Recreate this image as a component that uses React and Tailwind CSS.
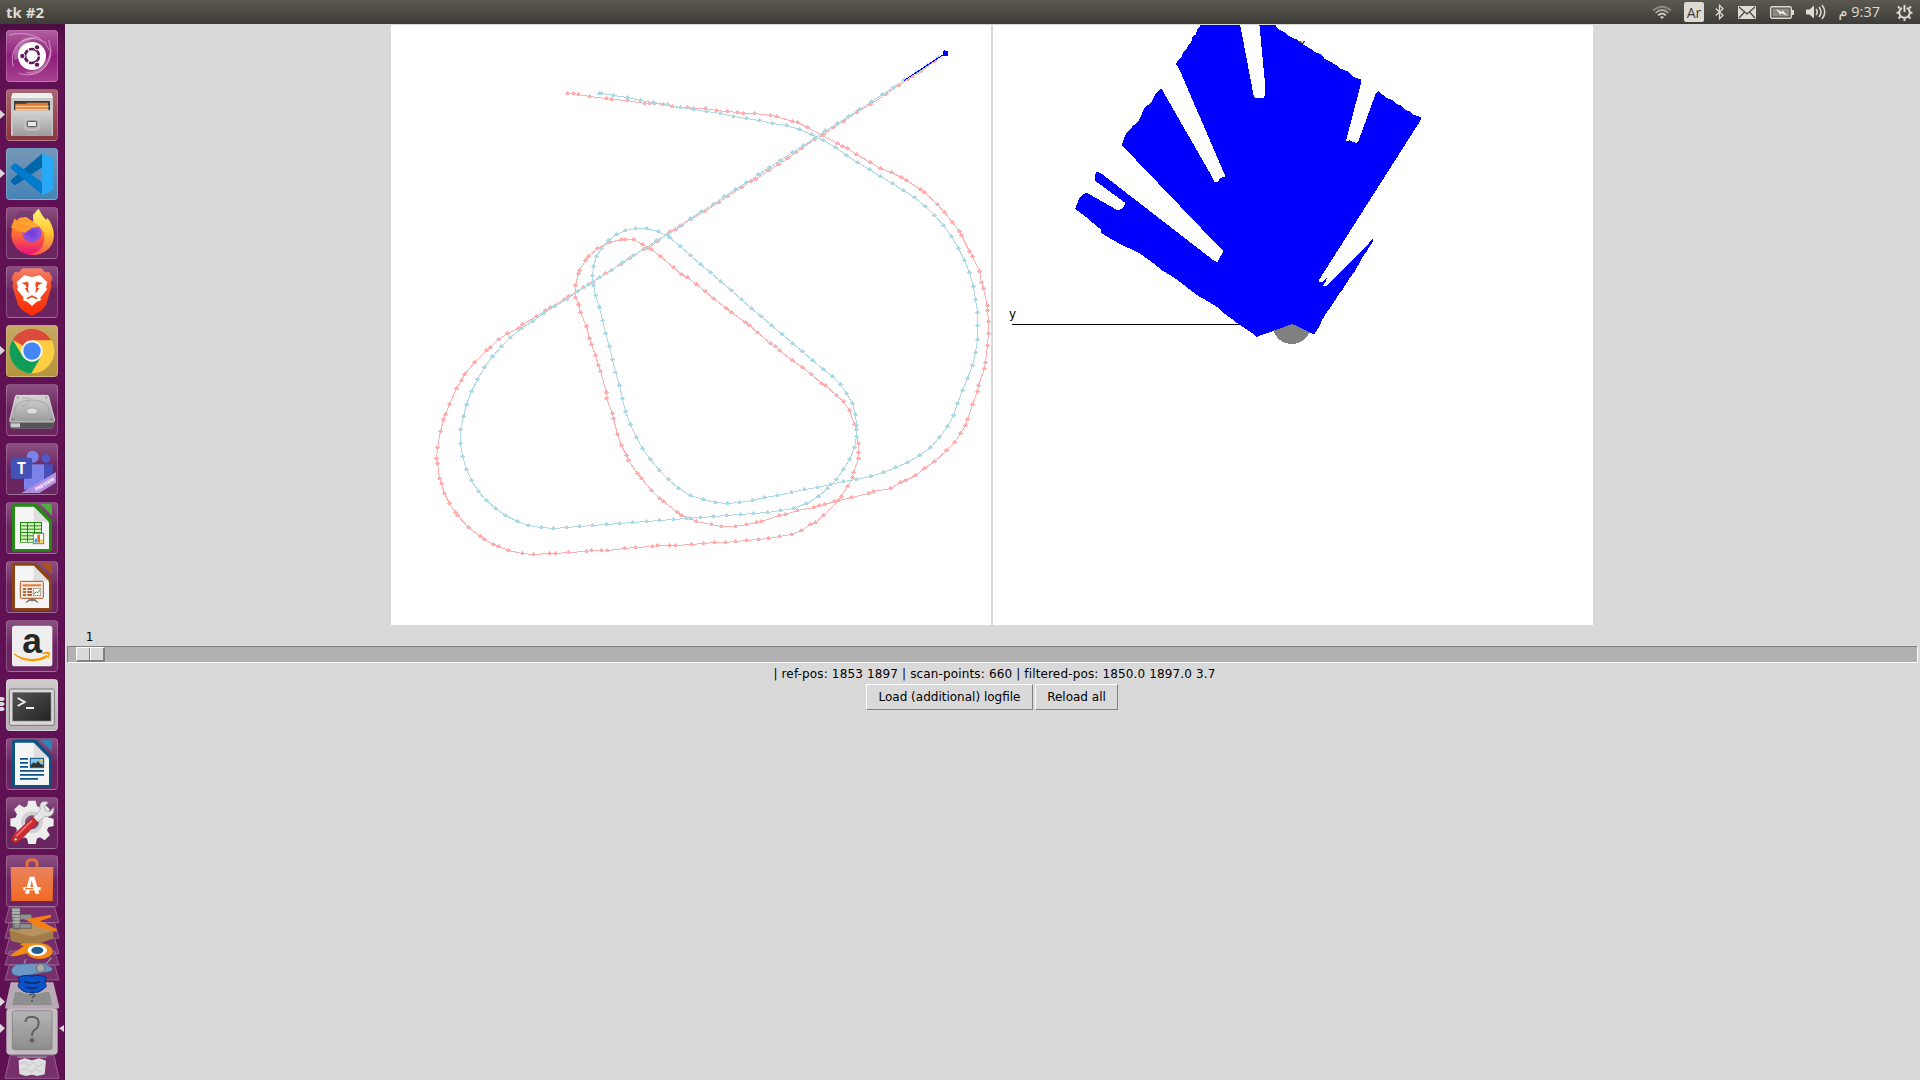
import React from "react";

/* Recorded samples, split by chart half: "u" upper half, "l" lower half. */
const REFERENCE_TRACK = [
  ["u", "398,219 415,220 428,222 458,229 504,235 517,238 561,241 607,250 620,250 634,250 658,252 683,259 704,262 723,261 740,265 772,265 801,270 831,273 858,276 875,280 904,280 948,285 963,289 1007,303 1020,306 1047,322 1088,346 1128,370 1142,378 1155,384 1179,402 1217,427 1245,445 1274,456 1301,471 1315,480 1353,508 1363,517 1398,552 1418,577 1439,606 1458,633 1463,646 1485,694 1493,709 1512,754 1517,787 1523,805 1534,856 1534,871"],
  ["l", "1537,64 1537,100 1534,136 1528,187 1526,205 1509,256 1506,274 1493,313 1479,358 1474,376 1461,400 1444,427 1423,451 1390,484 1363,505 1339,526 1312,541 1298,547 1271,565 1226,574 1212,580 1166,592 1120,604 1093,613 1080,616 1063,622 1020,631 988,643 971,646 923,664 910,667 882,673 853,679 815,679 788,673 747,664 731,654 706,646 696,636 657,603 647,595 626,570 599,534 587,519 563,481 557,465 544,435 533,403 522,355 519,340 503,295 503,277 487,213 482,196 474,165 462,132 459,115 449,78 433,37 427,12"],
  ["u", "419,832 419,796 427,760 431,751 447,720 455,709 480,685 511,667 544,657 556,657 577,657 601,672 626,687 649,709 685,741 707,763 723,771 747,793 771,814 793,835 828,865 842,877"],
  ["l", "880,67 890,75 911,97 948,130 960,138 971,151 1006,181 1034,202 1057,223 1085,250 1096,256 1125,286 1145,304 1160,331 1174,373 1179,388 1180,408 1185,430 1185,457 1185,475 1171,517 1168,532 1155,559 1139,589 1130,601 1090,646 1069,667 1055,673 1031,691 1004,703 971,709 942,715 915,718 882,721 853,724 826,727 796,727 766,730 734,733 691,736 674,736 641,736 628,739 583,742 552,745 507,751 491,751 463,751 450,754 401,757 366,760 350,760 307,763 277,760 239,750 211,739 198,733 174,718 163,709 130,682 100,646 95,636 79,610 65,580 57,550 52,535 46,490 44,475 46,442 55,394 63,358 68,343 80,313 98,265 111,241 120,223 147,187 180,151 190,142 211,118 236,100 265,85 277,73"],
  ["u", "315,889 339,871 352,862 391,838 401,829 442,802 465,785 501,760 541,733 566,715 604,688 615,684 641,662 677,634 691,628 707,616 731,598 769,574 807,547 831,529 869,502 893,484 907,478 942,451 968,432 993,415 1015,397 1031,385 1067,358 1090,342 1117,322 1145,304 1180,276 1217,253 1258,223 1293,196 1317,178 1332,169 1352,153 1390,122 1420,100"],
];

const FILTERED_TRACK = [
  ["u", "485,219 491,220 523,226 561,232 596,241 631,246 669,253 704,262 739,268 774,274 812,280 848,289 883,295 918,301 953,310 991,316 1025,328 1058,343 1090,361 1122,382 1152,406 1182,427 1215,448 1244,469 1277,490 1306,511 1337,532 1366,559 1390,586 1415,616 1436,649 1455,685 1471,721 1485,757 1496,799 1501,838 1507,877"],
  ["l", "1507,76 1507,118 1501,157 1493,196 1479,235 1466,271 1453,310 1442,346 1426,379 1404,412 1380,442 1350,466 1317,487 1285,502 1252,517 1217,529 1180,538 1145,544 1109,553 1074,562 1039,568 1004,577 966,586 931,592 899,600 864,607 831,610 799,607 766,598 731,586 699,565 671,538 647,511 622,478 601,445 584,412 568,373 555,334 547,295 538,256 528,217 519,178 511,139 501,100 492,61 484,22"],
  ["u", "474,826 468,796 465,766 468,739 476,709 490,685 509,660 531,643 556,631 583,625 612,625 645,633 674,652 704,679 731,706 758,733 785,757 812,784 842,811 869,838 896,865 922,889"],
  ["l", "950,75 979,102 1007,130 1033,154 1061,181 1090,208 1114,229 1136,253 1152,280 1168,310 1176,343 1179,376 1179,409 1174,442 1160,478 1144,508 1125,538 1101,565 1076,589 1044,610 1009,625 974,631 939,637 902,640 866,643 828,646 793,649 758,652 720,655 685,658 647,661 612,664 574,667 539,670 504,673 466,676 431,679 396,682 360,685 328,682 293,676 263,664 230,646 203,625 179,601 157,574 138,541 125,508 114,469 109,430 109,388 117,349 125,313 138,274 155,238 174,202 196,169 220,139 245,112 273,85 303,64"],
  ["u", "334,880 363,859 396,838 425,814 455,793 485,772 517,751 547,727 577,706 609,685 639,661 669,641 701,619 731,595 761,574 793,553 823,529 853,508 883,487 915,463 945,442 975,421 1007,397 1036,376 1066,355 1096,331 1128,310 1158,289 1188,268 1220,244 1250,223 1280,202 1309,178 1343,155 1372,135 1401,111 1420,100"],
];

const toCanvas = (track) =>
  track.flatMap(([half, list]) =>
    list.split(" ").map((p) => {
      const [a, b] = p.split(",").map(Number);
      return [Math.round(28.7 + a * 0.3699), Math.round((half === "u" ? -5 : 275) + b / 3)];
    })
  );

function Track({ data, color }) {
  const pts = toCanvas(data);
  return (
    <g fill={color} shapeRendering="crispEdges">
      <polyline points={pts.map((p) => `${p[0] + 0.5},${p[1] + 0.5}`).join(" ")} fill="none" stroke={color} strokeWidth="1" />
      {pts.map(([x, y], i) => (
        <path key={i} d={`M${x} ${y - 2}h1v1h1v1h1v1h-1v1h-3v-1h-1v-1h1v-1h1z`} />
      ))}
    </g>
  );
}

function TrackCanvas() {
  return (
    <svg width="600" height="600" className="block bg-white">
      <Track data={REFERENCE_TRACK} color="#ffaeb0" />
      <Track data={FILTERED_TRACK} color="#add8e6" />
      <g shapeRendering="crispEdges" fill="#0000ff">
        <path d="M513 55.5L554 28.5" stroke="#0000ff" strokeWidth="1" />
        <path d="M552 26h1v-1h1v1h3v5h-5z" />
      </g>
    </svg>
  );
}

function ScanCanvas() {
  return (
    <svg width="600" height="600" viewBox="993 25 600 600" className="block bg-white">
      <path d="M1012 324.5H1292" stroke="#000" shapeRendering="crispEdges" />
      <text x="1009" y="318" fontSize="12" fontFamily="DejaVu Sans, sans-serif">y</text>
      <text x="1298.5" y="48" fontSize="12" fontFamily="DejaVu Sans, sans-serif">x</text>
      <circle cx="1291.8" cy="324.5" r="19.5" fill="#808080" shapeRendering="crispEdges" />
      <g transform="translate(1000 20) scale(.33333)">
        <path
          shapeRendering="crispEdges"
          fill="#0000ff"
          d="M600 12L601 20L591 30L588 43L578 50L574 66L565 75L558 90L549 99L543 114L533 123L527 131L537 145L676 469L660 475L654 486L642 485L636 470L488 212L484 207L475 212L463 228L457 242L448 254L439 258L430 270L424 285L414 306L397 319L390 330L379 340L371 357L366 376L670 694L652 726L642 722L302 459L290 456L285 464V482L376 549L370 562L358 571L349 569L262 519L250 522L237 536L226 566L240 578L252 586L304 630L303 639L351 667L420 701L465 733L487 752L520 771L595 828L620 842L656 864L666 876L700 900L715 912L763 944L769 951L822 932L877 912L932 938L942 944L960 917L964 904L981 876L1000 850L1020 817L1028 808L1048 776L1065 753L1080 726L1087 712L1098 697L1119 665V657L980 797L968 798L977 785L981 774L967 786L957 786V780L1263 299V292L1240 284L1230 275L1214 268L1203 256L1190 252L1178 240L1160 234L1145 222L1135 213L1128 219L1076 361L1069 370L1058 365L1050 361L1038 363L1083 190V178L1065 173L1052 164L1042 154L1021 146L1010 136L989 124L973 116L965 104L947 97L934 88L915 76L901 70L893 60L865 47L854 37L832 25L824 12H778L796 200V225L790 234H767L761 227L720 12Z"
        />
      </g>
    </svg>
  );
}

/* ---------- launcher artwork, drawn on a 156-unit tile ---------- */
const UbuntuArt = () => (
  <>
    <g fill="none" stroke="#e6b4dc" strokeWidth="3" opacity=".7">
      <path d="M22 110C5 50 60 0 122 40" />
      <path d="M128 30C150 100 100 150 40 130" />
      <path d="M10 15C50 5 105 10 130 60" />
    </g>
    <path d="M26 90C15 45 55 8 105 25C80 20 40 40 36 85ZM134 50C150 100 90 150 55 125C95 130 130 100 134 50Z" fill="#fff" opacity=".28" />
    <circle cx="78" cy="78" r="42" fill="#fff" />
    <circle cx="78" cy="78" r="21" fill="none" stroke="#5e1a55" strokeWidth="8" strokeDasharray="40 3.98" transform="rotate(4 78 78)" />
    <g fill="#5e1a55" stroke="#fff" strokeWidth="3">
      <circle cx="49" cy="78" r="8" /><circle cx="93" cy="52" r="8" /><circle cx="93" cy="104" r="8" />
    </g>
  </>
);
const FilesArt = () => (
  <>
    <path d="M20 12H136L141 30V140H15V30Z" fill="#c9c9c9" />
    <path d="M20 12H136L141 27H15Z" fill="#efefef" />
    <rect x="24" y="36" width="108" height="30" fill="#3b3b3b" />
    <path d="M28 44H60L64 41H126V66H28Z" fill="#e07c36" />
    <path d="M28 50H128V55H28ZM28 59H128V64H28Z" fill="#f8c48e" />
    <rect x="21" y="64" width="116" height="76" fill="url(#metal)" />
    <rect x="57" y="91" width="42" height="32" rx="6" fill="#b5b5b5" stroke="#ddd" strokeWidth="2" />
    <rect x="64" y="97" width="28" height="16" rx="3" fill="#e8e8e8" stroke="#444" strokeWidth="3" />
  </>
);
const CodeArt = () => (
  <>
    <path d="M14 97L110 16V57L30 110Q26 112 23 109L15 102Z" fill="#0065a9" />
    <path d="M15 55L25 46Q29 45 32 48L110 104V138L104 136L15 62Q12 58 15 55Z" fill="#007acc" />
    <path d="M108 15L136 27Q141 30 141 35V120Q141 125 137 128L108 141Z" fill="#28a9f5" />
  </>
);
const FirefoxArt = () => (
  <>
    <circle cx="78" cy="82" r="62" fill="url(#foxBody)" />
    <path d="M98 5C106 20 112 32 122 40L124 32C148 62 150 100 130 123C110 142 90 146 68 142C100 140 116 118 115 88C114 68 98 55 82 48C76 34 84 16 98 5Z" fill="url(#foxTop)" />
    <path d="M36 14L28 34L60 30L82 44L80 12Z" fill="#793c6f" />
    <circle cx="78" cy="78" r="29" fill="url(#foxCore)" />
    <path d="M15 62L26 34L37 45C43 50 60 52 77 62C72 70 60 72 57 78C46 72 38 76 28 66Z" fill="#ff9a2e" />
    <path d="M37 45L82 44L100 60L77 62C60 52 43 50 37 45Z" fill="#ffa62e" />
  </>
);
const BraveArt = () => (
  <>
    <path d="M50 7H106L118 19L130 18L139 37L134 50L137 60L120 117L108 132L78 150L48 132L36 117L19 60L22 50L17 37L26 18L38 19Z" fill="url(#brave)" />
    <path d="M54 28L78 33L102 28L124 49L120 63L123 70L103 95L105 103L92 107L78 120L64 107L51 103L53 95L33 70L36 63L32 49Z" fill="#fff" />
    <path d="M46 51L65 47L68 53L66 70L69 80L64 78L56 66L63 66L58 57ZM110 51L91 47L88 53L90 70L87 80L92 78L100 66L93 66L98 57ZM61 96L78 88L95 96L91 100L78 94L65 100Z" fill="#ef4c23" />
  </>
);
const ChromeArt = () => (
  <>
    <circle cx="78" cy="78" r="67" fill="#ffcd42" />
    <path d="M78 78L20 44A67 67 0 0 1 136 46H78Z" fill="#db4a3c" />
    <path d="M50 94L20 44A67 67 0 0 0 76 145L106 94Z" fill="#109d58" />
    <circle cx="78" cy="78" r="32" fill="#f4f4f4" />
    <circle cx="78" cy="78" r="26" fill="#4486f4" />
  </>
);
const DiskArt = () => (
  <>
    <path d="M32 35H124L145 105V120Q145 134 135 134H21Q11 134 11 120V105Z" fill="#777" />
    <path d="M32 34H124Q127 34 128 38L146 108Q146 113 140 114H16Q10 113 11 108L28 38Q29 34 32 34Z" fill="url(#metal)" stroke="#eee" strokeWidth="2" />
    <rect x="12" y="116" width="132" height="16" rx="4" fill="#555" />
    <rect x="14" y="118" width="28" height="12" fill="#ccc" />
    <g fill="none" stroke="#999" strokeWidth="2"><ellipse cx="78" cy="79" rx="52" ry="31" /><ellipse cx="78" cy="81" rx="17" ry="9" fill="#ddd" /><path d="M50 43C100 36 55 70 45 66" /></g>
    <g fill="#777"><circle cx="35" cy="40" r="2.5" /><circle cx="121" cy="40" r="2.5" /><circle cx="20" cy="106" r="3" /><circle cx="136" cy="106" r="3" /></g>
  </>
);
const TeamsArt = () => (
  <>
    <circle cx="80" cy="41" r="18" fill="#7b83eb" /><circle cx="120" cy="46" r="13" fill="#5059c9" />
    <path d="M108 64H140V120H100Z" fill="#4550bb" />
    <path d="M54 64H114V140H54Z" fill="#7b83eb" />
    <rect x="14" y="44" width="64" height="63" rx="5" fill="#4452b8" />
    <text x="46" y="92" fontSize="46" fontWeight="bold" fill="#fff" textAnchor="middle" fontFamily="Open Sans, sans-serif">T</text>
    <path d="M46 150L150 87V119L100 150Z" fill="#b18ce0" />
    <text transform="translate(91 145) rotate(-31)" fontSize="15" fontWeight="bold" fill="#fff" fontFamily="Open Sans, sans-serif">PREVIEW</text>
  </>
);
function OfficeArt({ dark, light, children }) {
  return (
    <>
      <path d="M28 5H90L138 55V140Q138 149 129 149H27Q18 149 18 140V14Q18 5 28 5Z" fill={dark} />
      <path d="M102 5H130Q138 5 138 14V41Z" fill={light} />
      <path d="M27 14H83L129 63V141H27Z" fill="#f5f5f5" />
      <path d="M83 14V60H129Z" fill="#dfdfdf" />
      {children}
    </>
  );
}
const CalcArt = () => (
  <OfficeArt dark="#238b12" light="#4fae3d">
    <rect x="42" y="60" width="66" height="62" fill="#238b12" />
    {[0, 1, 2, 3, 4, 5].map((r) => [0, 1, 2].map((c) => <rect key={`${r}${c}`} x={45 + c * 21} y={63 + r * 10} width="18" height="7" fill="#d9f3c4" />))}
    <rect x="82" y="94" width="31" height="31" fill="#fff" stroke="#777" strokeWidth="3" />
    <path d="M86 110H93V122H86Z" fill="#27a6dd" /><path d="M94 98H102V122H94Z" fill="#e86c18" /><path d="M103 112H110V122H103Z" fill="#f8c310" />
  </OfficeArt>
);
const ImpressArt = () => (
  <OfficeArt dark="#8c4415" light="#a65522">
    <rect x="43" y="61" width="69" height="51" rx="3" fill="#f7e9dd" stroke="#b44e1d" strokeWidth="3" />
    <path d="M50 70H105V76H50Z" fill="#e07a3a" />
    <path d="M51 82H60V86H51ZM51 91H60V95H51ZM51 100H60V104H51ZM64 82H78V86H64ZM64 91H78V95H64ZM64 100H78V104H64Z" fill="#9a3b10" />
    <rect x="82" y="82" width="22" height="22" fill="#fff" stroke="#888" strokeWidth="2" />
    <path d="M84 99L91 92L95 96L102 86" stroke="#2d9c3c" strokeWidth="3" fill="none" />
    <path d="M60 125Q68 116 78 114Q88 116 96 125M78 112V121" stroke="#777" strokeWidth="4" fill="none" />
  </OfficeArt>
);
const WriterArt = () => (
  <OfficeArt dark="#0d5484" light="#2d83b8">
    <path d="M42 60H66V65H42ZM42 72H66V77H42ZM42 84H66V89H42ZM42 96H114V101H42ZM42 108H114V113H42ZM42 120H96V125H42Z" fill="#0d5484" />
    <rect x="73" y="61" width="40" height="28" fill="#83c4e8" stroke="#0d5484" strokeWidth="3" />
    <path d="M75 87V80L83 73L89 77L96 69L103 78L111 80V87Z" fill="#333" /><circle cx="106" cy="67" r="4" fill="#f4c430" />
  </OfficeArt>
);
const AmazonArt = () => (
  <>
    <rect x="18" y="17" width="121" height="122" rx="8" fill="#eeeeee" />
    <text x="78" y="100" fontSize="106" fontWeight="bold" fill="#262626" textAnchor="middle" fontFamily="Liberation Sans, sans-serif">a</text>
    <path d="M24 99C55 122 95 122 122 104L127 110C95 131 50 128 24 103Z" fill="#ff9900" />
    <path d="M109 98Q126 93 131 97Q134 106 125 119Q129 107 126 102Q120 100 109 102Z" fill="#ff9900" />
  </>
);
const TerminalArt = () => (
  <>
    <rect x="10" y="30" width="135" height="109" rx="5" fill="#d8d8d8" stroke="#777" strokeWidth="3" />
    <rect x="20" y="40" width="115" height="86" fill="url(#term)" stroke="#888" strokeWidth="2" />
    <path d="M35 57L56 69L35 81M60 87H84" stroke="#eee" strokeWidth="6" fill="none" />
  </>
);
const SettingsArt = () => (
  <>
    <g fill="#ededed">
      {[0, 45, 90, 135, 180, 225, 270, 315].map((a) => <path key={a} d="M67 11H89L95 36H61Z" transform={`rotate(${a} 78 76)`} />)}
      <circle cx="78" cy="76" r="51" />
    </g>
    <circle cx="78" cy="76" r="27" fill="#854a7a" stroke="#d2d2d2" strokeWidth="12" />
    <path d="M82 61L103 38C97 17 111 9 127 16L115 29L119 42L132 43L143 31C147 52 133 62 117 58L95 76Z" fill="#e5e5e5" stroke="#999" strokeWidth="2" />
    <path d="M80 62L95 76L38 134Q26 144 18 132Q13 123 22 114Z" fill="#cf2b30" stroke="#8d1218" strokeWidth="2" />
    <path d="M78 70L30 118" stroke="#ee7777" strokeWidth="5" /><circle cx="29" cy="127" r="5" fill="#ddd" stroke="#7a1115" strokeWidth="2" />
  </>
);
const SoftwareArt = () => (
  <>
    <path d="M63 42V25Q63 14 78 14Q93 14 93 25V42" stroke="#e5703c" strokeWidth="9" fill="none" />
    <path d="M14 36H142L140 138H16Z" fill="url(#bag)" />
    <path d="M57 116L71 65H85L100 116H88L77 76L69 116ZM52 96H104V106H52Z" fill="#fff" />
    <path d="M57 99H82V103H57Z" fill="#f07838" />
  </>
);

const APPS = [
  { name: "Dash", art: UbuntuArt, tile: "bg-linear-to-b from-[#b05c9f] via-[#8e1c7c] to-[#a8408f]" },
  { name: "Files", art: FilesArt, tile: "bg-linear-to-b from-[#a96670] to-[#8a353f]", pips: 1 },
  { name: "Visual Studio Code", art: CodeArt, tile: "bg-linear-to-b from-[#7597b5] to-[#4583b6]", pips: 1 },
  { name: "Firefox", art: FirefoxArt },
  { name: "Brave", art: BraveArt },
  { name: "Chrome", art: ChromeArt, tile: "bg-linear-to-b from-[#c5a865] to-[#b5943c]", pips: 1 },
  { name: "Disk", art: DiskArt },
  { name: "Teams", art: TeamsArt },
  { name: "Calc", art: CalcArt },
  { name: "Impress", art: ImpressArt },
  { name: "Amazon", art: AmazonArt },
  { name: "Terminal", art: TerminalArt, tile: "bg-linear-to-b from-[#d0cccd] to-[#b9b2b6]", pips: 3 },
  { name: "Writer", art: WriterArt },
  { name: "Settings", art: SettingsArt },
  { name: "Software", art: SoftwareArt, row: "-mt-px" },
];

function LauncherItem({ app }) {
  const Art = app.art;
  return (
    <div className={`flex h-[52px] shrink-0 items-center ${app.row || ""}`}>
      <svg width="6" height="52" className="shrink-0" fill="#dcd5d9">
        {app.pips === 1 && <path d="M0 21L5 25.5L0 30Z" />}
        {app.pips === 3 && <path d="M0 18H3L5 20L3 22H0ZM0 23H3L5 25L3 27H0ZM0 28H3L5 30L3 32H0Z" />}
      </svg>
      <div className={`size-[52px] shrink-0 rounded-[4px] border border-white/20 ${app.tile || "bg-linear-to-b from-[#8a4f80] via-[#6a2460] to-[#6b2561]"}`}>
        <svg viewBox="3 3 150 150" className="size-full overflow-visible"><Art /></svg>
      </div>
    </div>
  );
}

function FoldedItems() {
  return (
    <svg width="65" height="174" viewBox="0 618 195 522" className="block shrink-0">
      <g fill="#8a4a80" fillOpacity=".55" stroke="#a87aa0" strokeWidth="2">
        <path d="M28 618H164L177 665H15Z" /><path d="M28 665H164L177 712H15Z" /><path d="M28 712H164L177 758H15Z" />
        <path d="M28 750H164L177 792H15Z" /><path d="M28 792H164L177 837H15Z" />
      </g>
      <path d="M28 684L58 672L132 664L160 688L158 712L96 735L34 719Z" fill="#b8935e" /><path d="M28 688L96 707L160 690V712L96 735L34 719Z" fill="#a27c48" />
      <path d="M35 620H60V684H38ZM42 640H92Q100 648 92 656H62V668H94V682H42Z" fill="#8f9290" stroke="#555" strokeWidth="2" />
      <path d="M36 627H60M36 636H60M36 645H60M38 654H60M38 663H60" stroke="#ccc" strokeWidth="3" />
      <path d="M75 655L153 641V649L120 660L170 684V692L118 680Z" fill="#f57f17" />
      <path d="M28 764L72 735L60 732L66 727H112C150 724 170 750 150 765C128 780 88 775 82 757L44 766Z" fill="#f28a16" />
      <ellipse cx="112" cy="748" rx="29" ry="17" fill="#fff" /><ellipse cx="112" cy="748" rx="18" ry="11" fill="#215d93" />
      <path d="M78 775L70 793M154 770L132 797" stroke="#999" strokeWidth="4" />
      <path d="M34 808Q38 795 50 790L133 786L157 802Q158 811 146 812L88 822Q60 830 38 820Z" fill="#6c96c5" stroke="#395f8f" strokeWidth="2" />
      <circle cx="122" cy="801" r="13" fill="#aaa" stroke="#666" strokeWidth="3" />
      <path d="M32 844H55Q60 870 96 876Q132 870 138 844H160L178 918Q178 923 170 923H22Q14 923 16 917Z" fill="#c9c3c7" fillOpacity=".85" />
      <path d="M54 830Q70 820 96 825Q124 820 140 830L134 846Q145 856 130 864Q116 878 96 875Q75 878 62 864Q48 854 60 845Z" fill="#0b52c9" stroke="#062e83" strokeWidth="3" />
      <path d="M74 842Q96 852 120 842M78 858Q96 866 114 858" stroke="#062050" strokeWidth="4" fill="none" />
      <path d="M44 872H62Q96 884 134 872H150L158 914H35Z" fill="#8f8f8f" stroke="#bbb" strokeWidth="2" />
      <path d="M88 882Q98 876 104 882Q104 886 96 891M96 897V902" stroke="#555" strokeWidth="5" fill="none" />
      <rect x="19" y="922" width="154" height="139" rx="12" fill="#c4bdc2" />
      <rect x="37" y="929" width="119" height="117" rx="6" fill="url(#unknown)" stroke="#777" strokeWidth="2" />
      <path d="M76 963Q78 947 96 947Q116 948 116 966Q116 980 102 988Q96 993 96 1005" stroke="#606060" strokeWidth="6" fill="none" /><circle cx="96" cy="1018" r="7" fill="#606060" />
      <path d="M30 1064H162L177 1132H15Z" fill="#8a4a80" fillOpacity=".55" stroke="#a87aa0" strokeWidth="2" />
      <path d="M52 1066H140V1071H52Z" fill="#8a8a8a" /><path d="M56 1078L74 1072L96 1078L118 1072L138 1079L134 1120L112 1125L96 1121L78 1125L58 1119Z" fill="#dedede" />
      <path d="M60 1090L75 1082L84 1096L100 1084L112 1098L130 1088M64 1108L80 1102L92 1114L108 1104L126 1114" stroke="#bbb" strokeWidth="2" fill="none" />
      <path d="M0 888L15 902L0 916ZM0 968L15 982L0 996ZM192 972L177 982L192 993Z" fill="#dcd5d9" />
    </svg>
  );
}

function Gradients() {
  return (
    <svg width="0" height="0" className="absolute">
      <defs>
        <linearGradient id="metal" x2="0" y2="1"><stop stopColor="#d5d5d5" /><stop offset="1" stopColor="#9c9c9c" /></linearGradient>
        <linearGradient id="unknown" x2="0" y2="1"><stop stopColor="#b5b5b5" /><stop offset="1" stopColor="#8d8d8d" /></linearGradient>
        <linearGradient id="term" x2="1" y2="1"><stop stopColor="#555" /><stop offset="1" stopColor="#222" /></linearGradient>
        <linearGradient id="bag" x2="0" y2="1"><stop stopColor="#e8835c" /><stop offset="1" stopColor="#f26a24" /></linearGradient>
        <linearGradient id="brave" x2="0" y2="1"><stop stopColor="#f4816b" /><stop offset=".4" stopColor="#f2502b" /><stop offset="1" stopColor="#ff2a00" /></linearGradient>
        <linearGradient id="foxBody" x2="0" y2="1"><stop stopColor="#ffb52e" /><stop offset=".5" stopColor="#ff6a35" /><stop offset="1" stopColor="#e8117f" /></linearGradient>
        <linearGradient id="foxTop" x2="0" y2="1"><stop stopColor="#fff176" /><stop offset=".5" stopColor="#ffc933" /><stop offset="1" stopColor="#ff5a45" /></linearGradient>
        <radialGradient id="foxCore"><stop stopColor="#6a3de0" /><stop offset="1" stopColor="#9a55d8" /></radialGradient>
      </defs>
    </svg>
  );
}

function TopBar() {
  return (
    <header className="flex h-6 shrink-0 items-center justify-between bg-linear-to-b from-[#5b594f] to-[#3d3c37] pl-1.5 pr-[7px] text-[#dfdbd2]">
      <span className="-mt-px font-['Open_Sans',sans-serif] text-[15px] font-bold leading-6">tk #2</span>
      <div className="flex h-full items-center">
        <svg width="20" height="16" viewBox="0 0 20 16" className="mr-3" fill="none" stroke="#dfdbd2" strokeWidth="1.7">
          <path d="M1 6.5Q10-1 19 6.5" opacity=".4" /><path d="M3.5 9Q10 3 16.5 9" opacity=".65" /><path d="M6.2 11.3Q10 8 13.8 11.3" /><path d="M8 13L10 15L12 13Q10 11.6 8 13Z" fill="#dfdbd2" stroke="none" />
        </svg>
        <span className="mr-[11px] flex h-5 w-5 items-center justify-center rounded-[2px] bg-[#dfdbd2] font-['Open_Sans',sans-serif] text-[14px] font-medium text-[#3d3c37]">Ar</span>
        <svg width="9" height="16" viewBox="0 0 9 16" className="mr-3.5" fill="none" stroke="#dfdbd2" strokeWidth="1.3"><path d="M.7 4.5L8 11.3L4.5 14.7V1.3L8 4.7L.7 11.5" /></svg>
        <svg width="18" height="13" viewBox="0 0 18 13" className="mr-3.5"><rect width="18" height="13" fill="#dfdbd2" /><path d="M1 1L9 8L17 1M1 12L6.5 6M17 12L11.5 6" stroke="#45443d" strokeWidth="1.2" fill="none" /></svg>
        <svg width="24" height="13" viewBox="0 0 24 13" className="mr-3"><rect x=".7" y=".7" width="20.6" height="11.6" rx="1.5" fill="none" stroke="#dfdbd2" strokeWidth="1.4" /><rect x="2.5" y="2.5" width="17" height="8" fill="#8c897f" /><path d="M22 4H24V9H22Z" fill="#dfdbd2" /><path d="M6 3L12 6L12.5 4L17.5 10L11 7L10.5 9Z" fill="#f2f0ea" /></svg>
        <svg width="20" height="16" viewBox="0 0 20 16" className="mr-3" fill="none" stroke="#dfdbd2" strokeWidth="1.5"><path d="M0 5.5H3.5L8 1.5V14.5L3.5 10.5H0Z" fill="#dfdbd2" stroke="none" /><path d="M10 5Q12.5 8 10 11M13 3Q17 8 13 13M16 1Q21.5 8 16 15" /></svg>
        <span dir="rtl" className="mr-4 w-[42px] whitespace-nowrap font-['Open_Sans','DejaVu_Sans',sans-serif] text-[14.5px] leading-6">9:37 م</span>
        <svg width="17" height="17" viewBox="0 0 17 17" fill="none" stroke="#dfdbd2"><path d="M6 3.8A5.3 5.3 0 1 0 11 3.8" strokeWidth="2" /><path d="M8.5 1V8" strokeWidth="2" /><path d="M3.7 4.2L2 2.5M13.3 4.2L15 2.5M3 8.8H.5M14 8.8H16.5M4.2 12.8L2.5 14.5M12.8 12.8L14.5 14.5M8.5 14.5V17" strokeWidth="2" /></svg>
      </div>
    </header>
  );
}

function TkButton({ className, children }) {
  return (
    <button className={`h-[26px] border border-b-[#808080] border-l-white border-r-[#808080] border-t-white bg-[#d9d9d9] text-center leading-6 ${className}`}>{children}</button>
  );
}

export default function App() {
  return (
    <div className="flex h-[1080px] w-[1920px] flex-col overflow-hidden bg-[#d9d9d9]">
      <Gradients />
      <TopBar />
      <div className="flex min-h-0 flex-1">
        <nav className="flex w-[65px] shrink-0 flex-col overflow-hidden border-r border-[#50104a] bg-linear-to-b from-[#4a0d42] via-[#5f1153] via-2% to-[#5f1153]">
          <div className="flex flex-col gap-[7px] pt-1.5">
            {APPS.map((app) => <LauncherItem key={app.name} app={app} />)}
          </div>
          <div><FoldedItems /></div>
        </nav>
        <main className="flex flex-1 flex-col pt-px font-['DejaVu_Sans',sans-serif] text-[12px] text-black">
          <div className="flex justify-center gap-0.5 pr-px">
            <TrackCanvas />
            <ScanCanvas />
          </div>
          <div className="mt-1 h-[17px] w-[49px] text-center leading-[17px]">1</div>
          <div className="mx-0.5 flex h-[17px] border border-b-white border-l-[#808080] border-r-white border-t-[#808080] bg-[#b1b1b1] pl-[8px]">
            <div className="flex h-[15px] w-[29px] border-b-2 border-l border-r-2 border-t border-b-[#808080] border-l-white border-r-[#808080] border-t-white bg-[#d9d9d9]">
              <span className="w-[13px] border-r border-[#808080]" />
              <span className="w-px bg-white" />
            </div>
          </div>
          <div className="mt-0.5 h-[19px] w-full whitespace-pre pl-[4px] text-center leading-[19px] tracking-[0.145px]">| ref-pos: 1853 1897 | scan-points: 660 | filtered-pos: 1850.0 1897.0 3.7</div>
          <div className="flex justify-center gap-0.5 pr-px">
            <TkButton className="w-[167px]">Load (additional) logfile</TkButton>
            <TkButton className="w-[83px]">Reload all</TkButton>
          </div>
        </main>
      </div>
    </div>
  );
}
